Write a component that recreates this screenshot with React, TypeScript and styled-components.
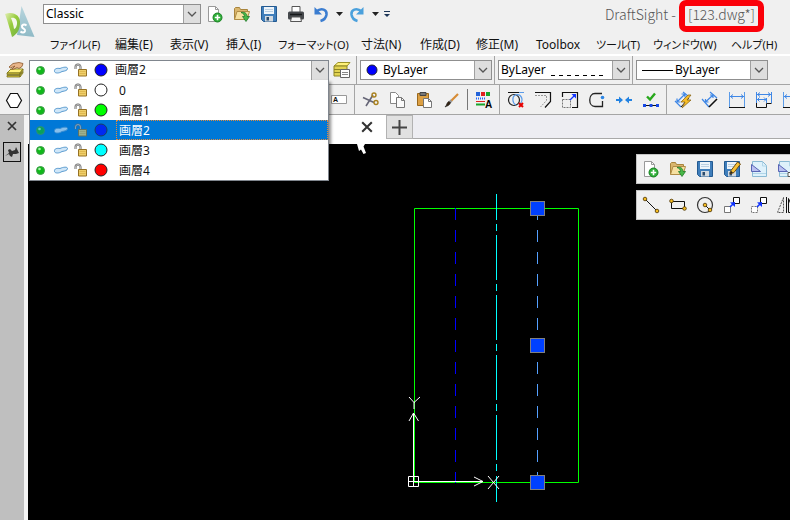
import React, { useState } from "react";
import styled, { createGlobalStyle } from "styled-components";

const GlobalStyle = createGlobalStyle`
  *, *::before, *::after { box-sizing: border-box; }
  body {
    margin: 0;
    background: #f0f0f0;
    color: #111;
    font-family: "Noto Sans", "Noto Sans CJK JP", sans-serif;
    font-size: 12px;
    line-height: 16px;
  }
  button, select { font: inherit; color: inherit; }
  svg { display: block; flex: none; }
`;

/* ---------- layout ---------- */

const Window = styled.div`
  display: flex;
  flex-direction: column;
  min-height: 100vh;
  overflow: hidden;
`;

const Header = styled.header`
  display: flex;
  height: 56px;
  border-bottom: 2px solid #fff;
`;

const LogoBox = styled.div`
  width: 43px;
  padding: 6px 0 0 4px;
  flex: none;
`;

const HeaderMain = styled.div`
  display: flex;
  flex-direction: column;
  flex: 1;
  min-width: 0;
`;

const TitleRow = styled.div`
  display: flex;
  align-items: center;
  height: 32px;
  padding-bottom: 4px;
`;

const Title = styled.h1`
  display: flex;
  align-items: center;
  margin: 0 26px 0 auto;
  gap: 3px;
  white-space: nowrap;
  color: #555;
  font-family: "Noto Sans CJK JP", sans-serif;
  font-size: 14px;
  font-weight: 300;
  line-height: 20px;
`;

const FileName = styled.span`
  display: flex;
  align-items: center;
  justify-content: center;
  min-width: 85px;
  height: 32px;
  margin-top: 3px;
  padding-bottom: 4px;
  border: 6px solid #fb0009;
  border-radius: 7px;
`;

const MenuBar = styled.nav`
  display: grid;
  grid-template-columns: 65px 55px 56px 52px 83px 59px 56px 60px 60px 57px 78px auto;
  justify-content: start;
  padding: 4px 0 0 7px;
`;

const MenuItem = styled.button<{ $kana: boolean }>`
  padding: 0;
  border: 0;
  background: none;
  text-align: left;
  white-space: nowrap;
  font-feature-settings: "palt";
  font-size: ${(p) => (p.$kana ? "11px" : "12px")};
  line-height: 18px;
`;

const Bar = styled.div<{ $h: number }>`
  display: flex;
  align-items: center;
  flex: none;
  height: ${(p) => p.$h}px;
  border-bottom: 1px solid #a5a5a5;
  overflow: hidden;
`;

const LayerBar = styled(Bar)`
  position: relative;
  overflow: visible;
`;

const ListGap = styled.div`
  flex: none;
  width: 297px;
`;

const Separator = styled.span<{ $wide?: boolean; $short?: boolean }>`
  flex: none;
  align-self: center;
  width: 1px;
  height: ${(p) => (p.$short ? "21px" : "100%")};
  margin: 0 ${(p) => (p.$wide ? "3px" : "2px")} 0 2px;
  background: ${(p) => (p.$short ? "#777" : "#a5a5a5")};
`;

const IconButton = styled.button<{ $w?: number }>`
  display: flex;
  align-items: center;
  justify-content: center;
  flex: none;
  width: ${(p) => p.$w ?? 27}px;
  height: 24px;
  padding: 0;
  border: 0;
  background: none;
`;

/* ---------- combo boxes ---------- */

const ComboBox = styled.label<{ $w: number }>`
  display: grid;
  flex: none;
  width: ${(p) => p.$w}px;
  height: 20px;
  border: 1px solid #8f8f8f;
  background: #fff;
  > * { grid-area: 1 / 1; }
`;

const ComboSelect = styled.select<{ $lead: number }>`
  appearance: none;
  width: 100%;
  min-width: 0;
  padding: 0 18px 0 ${(p) => p.$lead}px;
  border: 0;
  background: transparent;
  color: #000;
`;

const ComboArrow = styled.span`
  display: flex;
  align-items: center;
  justify-content: center;
  justify-self: end;
  width: 17px;
  border-left: 1px solid #a0a0a0;
  background: #dedede;
  pointer-events: none;
`;

const ComboMark = styled.span<{ $end?: boolean }>`
  display: flex;
  align-items: center;
  justify-self: ${(p) => (p.$end ? "end" : "start")};
  padding: ${(p) => (p.$end ? "0 26px 0 0" : "0 0 0 5px")};
  pointer-events: none;
`;

const LayerCombo = styled.button`
  display: flex;
  align-items: stretch;
  flex: none;
  width: 300px;
  height: 21px;
  padding: 0;
  border: 1px solid #80868e;
  background: #fff;
  color: #000;
  text-align: left;
`;

const LayerIcons = styled.span`
  display: grid;
  grid-template-columns: 21px 20px 20px 20px;
  place-items: center;
  flex: none;
  height: 100%;
`;

const LayerName = styled.span<{ $inList?: boolean; $selected?: boolean }>`
  flex: 1;
  margin-left: ${(p) => (p.$inList ? "5px" : "0")};
  padding-left: ${(p) => (p.$inList ? "3px" : "4px")};
  line-height: ${(p) => (p.$inList ? "21px" : "18px")};
  height: 100%;
  color: ${(p) => (p.$selected ? "#fff" : "#111")};
  outline: ${(p) => (p.$selected ? "1px dotted #e58a3a" : "none")};
  outline-offset: -1px;
`;

const LayerList = styled.ul`
  position: absolute;
  top: 24px;
  left: 29px;
  z-index: 3;
  width: 300px;
  margin: 0;
  padding: 0;
  border: 1px solid #80868e;
  border-top: 0;
  background: #fff;
  box-shadow: 2px 2px 3px rgba(0, 0, 0, 0.45);
  list-style: none;
`;

const LayerRow = styled.li<{ $selected: boolean }>`
  display: flex;
  height: 20px;
  background: ${(p) => (p.$selected ? "#0078d7" : "#fff")};
  svg { opacity: ${(p) => (p.$selected ? 0.65 : 1)}; }
`;

/* ---------- work area ---------- */

const Work = styled.div`
  display: flex;
  flex: 1;
  min-height: 0;
`;

const SidePanel = styled.aside`
  display: flex;
  flex-direction: column;
  align-items: flex-start;
  flex: none;
  gap: 8px;
  width: 28px;
  padding: 3px 0 0 3px;
  border-right: 4px solid #f4f4f4;
  background: #bfbfbf;
`;

const PanelButton = styled.button<{ $framed?: boolean }>`
  display: flex;
  align-items: center;
  justify-content: center;
  width: 18px;
  height: ${(p) => (p.$framed ? "20px" : "16px")};
  padding: 0;
  border: ${(p) => (p.$framed ? "1px solid #111" : "0")};
  background: none;
`;

const Document = styled.main`
  display: flex;
  flex-direction: column;
  flex: 1;
  min-width: 0;
`;

const TabStrip = styled.div`
  display: flex;
  flex: none;
  height: 29px;
  padding-bottom: 5px;
  background: #fff;
`;

const Tab = styled.div`
  display: flex;
  align-items: center;
  justify-content: flex-end;
  width: 358px;
  padding-right: 6px;
`;

const NewTab = styled.button`
  display: flex;
  align-items: center;
  justify-content: center;
  width: 27px;
  padding: 0;
  border: 1px solid #b2b2b2;
  background: #e1e1e1;
`;

const TabRest = styled.div`
  flex: 1;
  border-bottom: 1px solid #a9a9a9;
  background: #ededf2;
`;

const Canvas = styled.section`
  position: relative;
  flex: 1;
  background: #000;
  overflow: hidden;
`;

const Pointer = styled.div`
  position: absolute;
  top: 0;
  left: 329px;
`;

const FloatingBars = styled.div`
  position: absolute;
  top: 10px;
  left: 608px;
  right: 0;
  display: flex;
  flex-direction: column;
  gap: 6px;
`;

const FloatingBar = styled.div`
  display: flex;
  align-items: center;
  height: 30px;
  border: 1px solid #c4c4c4;
  border-right: 0;
  background: #f0f0f0;
  overflow: hidden;
`;

/* ---------- icons ---------- */

const Ico = ({ children, w = 18, h = 18 }: { children: React.ReactNode; w?: number; h?: number }) => (
  <svg width={w} height={h} viewBox={`0 0 ${w} ${h}`} fill="none" aria-hidden="true">
    {children}
  </svg>
);

const Logo = () => (
  <svg width="32" height="34" viewBox="0 0 32 34" aria-label="DraftSight">
    <defs>
      <linearGradient id="lg" x1="0" y1="0" x2="1" y2="1">
        <stop offset="0" stopColor="#e3efb4" />
        <stop offset=".45" stopColor="#97cc3c" />
        <stop offset="1" stopColor="#6fb046" />
      </linearGradient>
      <linearGradient id="lb" x1="0" y1="0" x2="0" y2="1">
        <stop offset="0" stopColor="#b9d6de" />
        <stop offset="1" stopColor="#8fbac6" />
      </linearGradient>
    </defs>
    <path d="M17.500 0 30.500 31 13 29Z" fill="url(#lb)" />
    <path d="M1 8C9 5 17 9 16 18C15.500 25 12 29 8 31C6 24 4 16 1 8Z" fill="url(#lg)" />
    <path d="M7 12C11 11 13.500 14 13 18C12.500 21 11.500 22.500 10 23C9.500 19 8.500 16 7 12Z" fill="#f4f8ea" />
    <path d="M22.500 19.500C20 17.500 17.500 19 18 21C18.500 23 21.500 22.500 21 25C20.500 27 18 27 16.500 25.500" fill="none" stroke="#fff" strokeWidth="2" />
  </svg>
);

const Chevron = () => (
  <Ico w={10} h={8}><path d="M1 2 5 6 9 2" stroke="#555" strokeWidth="1.3" /></Ico>
);

const NewIcon = () => (
  <Ico>
    <path d="M2.500 1.500h7l3 3v12h-10z" fill="#fff" stroke="#999" />
    <path d="M9.500 1.500v3h3" stroke="#999" />
    <circle cx="11.500" cy="12.500" r="4.500" fill="#2fae38" stroke="#188322" />
    <path d="M11.500 9.800v5.400M8.800 12.500h5.400" stroke="#fff" strokeWidth="1.600" />
  </Ico>
);
const OpenIcon = () => (
  <Ico>
    <path d="M1.500 14.500v-11l1-1h4l1 2h7v3" fill="#d9b56c" stroke="#a8843c" />
    <path d="M1.500 14.500 4 6.500h12.500l-2.500 8z" fill="#f6e0a0" stroke="#b08c46" />
    <path d="M8 7.500c4-.8 6 1 6 4h2.500L13 16.500 9.500 11.500h2c0-2-1-3-3.500-4z" fill="#48b848" stroke="#227a2a" strokeWidth=".8" />
  </Ico>
);
const SaveIcon = ({ edit }: { edit?: boolean }) => (
  <Ico>
    <path d="M1.500 1.500h15v15h-13l-2-2z" fill="#3f7ebb" stroke="#235a91" />
    <path d="M4 2h10v7H4z" fill="#edf4fa" />
    <path d="M5 4.500h8M5 6.500h8" stroke="#bbd0e2" />
    <path d="M5 11h8v5.500H5z" fill="#d3dae0" />
    <path d="M6.500 12h2.500v3.500H6.500z" fill="#2b4c6e" />
    {edit && <path d="M7 14 8 10.500 14.500 2l3 2-6.500 8.500z" fill="#f5c036" stroke="#6c4b13" />}
    {edit && <path d="M7 14 8 11l2 1.500z" fill="#222" />}
  </Ico>
);
const PrintIcon = () => (
  <Ico>
    <path d="M5 7V1.500h8V7" fill="#fff" stroke="#555" />
    <rect x="1" y="6.500" width="16" height="8" rx="1.500" fill="#45484c" />
    <path d="M3 9.500h12" stroke="#17191b" strokeWidth="1.500" />
    <path d="M4.500 12h9l1 4.500h-11z" fill="#f6f6f6" stroke="#555" />
  </Ico>
);
const UndoIcon = ({ flip }: { flip?: boolean }) => (
  <Ico>
    <g transform={flip ? "translate(18 0) scale(-1 1)" : undefined}>
      <path d="M4 6.500C10 2 15 5 14.500 9.500C14 13 12 15 8.500 16" stroke={flip ? "#4aa0dc" : "#3b7dd0"} strokeWidth="2.600" />
      <path d="M2.500 2v7.500H10z" fill={flip ? "#4aa0dc" : "#3b7dd0"} />
    </g>
  </Ico>
);
const CaretIcon = () => <Ico w={8} h={6}><path d="M1 1h7L4.500 5z" fill="#222" /></Ico>;
const MoreIcon = () => <Ico w={8} h={8}><path d="M1 1.500h6" stroke="#1d3557" /><path d="M1 4h6L4 7z" fill="#1d3557" /></Ico>;

const DotIcon = () => (
  <Ico w={11} h={11}>
    <circle cx="5.500" cy="5.500" r="4" fill="#0fb81a" stroke="#3f9d49" />
    <circle cx="4.500" cy="4" r="1.300" fill="#a8f0aa" />
  </Ico>
);
const BlobIcon = () => (
  <Ico w={16} h={10}>
    <path d="M1.500 6.500C1 3.500 4 3 7 3.500C10 2 14.500 1.500 14.500 3.500C14.500 5.500 12 6 9 6.500C6 8.500 2 8.500 1.500 6.500Z" fill="#cfe6f8" stroke="#5a9bd0" />
  </Ico>
);
const LockIcon = () => (
  <Ico w={14} h={14}>
    <path d="M1.500 6V4A2.500 2.500 0 0 1 6.500 4V7" stroke="#666" strokeWidth="2" />
    <path d="M1.500 6V4A2.500 2.500 0 0 1 6.500 4V7" stroke="#ddd" strokeWidth=".7" />
    <path d="M4.500 6.500h8v6.500h-8z" fill="#efcf6a" stroke="#957124" />
    <path d="M5.500 8.500h6M5.500 10.500h6" stroke="#dfb850" />
  </Ico>
);
const SwatchIcon = ({ color }: { color: string }) => (
  <Ico w={14} h={14}><circle cx="7" cy="7" r="6" fill={color} stroke="#222" /></Ico>
);

const LayersIcon = () => (
  <Ico w={20} h={20}>
    <path d="M2 13 6 9h12l-3 4z" fill="#fff27a" stroke="#8b8520" />
    <path d="M2 13h13v1.500H2zM2 15.500h13V17H2zM15 13l3-4v1.500L15 14.500zM15 17l3-4v-1.500l-3 4z" fill="#d8c63a" stroke="#77701c" strokeWidth=".8" />
    <path d="M4 7 8 3.500 14 2.500l4 1-1 3-3 2-2-1L9 9 6.500 9.500 10 6 5.500 8z" fill="#e8b58a" stroke="#8a5528" strokeWidth=".8" />
  </Ico>
);
const LayerSheetIcon = () => (
  <Ico>
    <path d="M1 5 5 1.500h12L14 5z" fill="#fff27a" stroke="#9a9228" />
    <path d="M1 5h13v10H1z" fill="#e2d352" stroke="#8c8425" />
    <path d="M1 8.500h13M1 11.500h6" stroke="#8c8425" />
    <path d="M7.500 8.500h9v8h-9z" fill="#fff" stroke="#666" />
    <path d="M9 11.500h6M9 13.500h6" stroke="#888" />
  </Ico>
);
const HexIcon = () => <Ico><path d="M5.500 2.500h7L16.500 9.500 12.500 16.500H5.500L1.500 9.500z" fill="#fff" stroke="#111" strokeWidth="1.200" /></Ico>;
const TextFieldIcon = () => (
  <Ico>
    <path d="M1.500 4.500h15v8h-15z" fill="#fff" stroke="#999" />
    <text x="3" y="11" fill="#111" fontSize="7" fontWeight="700" fontFamily="Liberation Sans, sans-serif">A</text>
  </Ico>
);
const CutIcon = () => (
  <Ico>
    <path d="M1 6.500 12 11.500M4 15 11 4" stroke="#667" strokeWidth="1.600" />
    <circle cx="12" cy="4" r="2" stroke="#a8801e" strokeWidth="1.400" />
    <circle cx="14" cy="11.500" r="2" stroke="#a8801e" strokeWidth="1.400" />
  </Ico>
);
const CopyIcon = () => (
  <Ico>
    <path d="M1.500 1.500h5l3 3v8h-8z" fill="#fff" stroke="#888" />
    <path d="M7.500 6.500h5l3 3v7h-8z" fill="#fafafa" stroke="#777" />
    <path d="M12.500 6.500v3h3" stroke="#777" />
  </Ico>
);
const PasteIcon = () => (
  <Ico>
    <path d="M1.500 2.500h11v12h-11z" fill="#dca044" stroke="#9a681c" />
    <path d="M4 1.500h6v3H4z" fill="#777" stroke="#444" />
    <path d="M7.500 7.500h5l3 3v6h-8z" fill="#fff" stroke="#777" />
    <path d="M12.500 7.500v3h3" stroke="#777" />
  </Ico>
);
const BrushIcon = () => (
  <Ico>
    <path d="M15 3 8 10" stroke="#d68b35" strokeWidth="2.200" />
    <path d="M8.500 9.500 6.500 11.500" stroke="#999" strokeWidth="2.600" />
    <path d="M7.500 11.500C7 14.500 4 15 2 16C4 14 3.500 12 5.500 10.500Z" fill="#332211" stroke="#222" strokeWidth=".6" />
  </Ico>
);
const PropsIcon = () => (
  <Ico>
    <path d="M1 1h4v4H1z" fill="#2463d8" /><path d="M6 1h4v4H6z" fill="#e02020" /><path d="M11 1h4v4h-4z" fill="#18a52b" />
    <path d="M1 7.500h10" stroke="#26f" strokeDasharray="1 1" strokeWidth="2" />
    <path d="M1 10.500h9" stroke="#e02020" /><path d="M1 13.500h9" stroke="#18a52b" strokeWidth="2" />
    <text x="10" y="17" fill="#000" fontSize="10" fontWeight="700" fontFamily="Liberation Sans, sans-serif">A</text>
  </Ico>
);
const OffsetDeleteIcon = () => (
  <Ico>
    <path d="M1 1.500h11" stroke="#111" /><path d="M12 1.500h5" stroke="#5a9be8" />
    <circle cx="7" cy="9" r="5.500" stroke="#222" strokeWidth="1.200" />
    <path d="M8 4C14 2 18 9 12 14M8 4C5 6 5 12 9 14" stroke="#5a9be8" strokeWidth="1.200" />
    <path d="M12 12l4 4M16 12l-4 4" stroke="#e60000" strokeWidth="2" />
  </Ico>
);
const ChamferIcon = () => (
  <Ico>
    <path d="M1 1.500h15.500v9L11 16.500" stroke="#111" strokeWidth="1.200" />
    <path d="M1 4.500h11.500v5L6.500 16" stroke="#999" strokeDasharray="2 1" />
  </Ico>
);
const ScaleIcon = () => (
  <Ico>
    <path d="M1.500 6V1.500h15v15H11" stroke="#111" strokeWidth="1.200" />
    <path d="M1.500 8.500h8v8h-8z" stroke="#777" strokeDasharray="2 1" />
    <path d="M9 9 14 4" stroke="#1034ff" strokeWidth="1.300" /><path d="M15 3v4.500L10.500 3z" fill="#1034ff" />
  </Ico>
);
const FilletIcon = () => (
  <Ico>
    <path d="M14 2.500H7C0 2.500 0 15.500 7 15.500H14.500V10" stroke="#222" strokeWidth="1.300" />
    <circle cx="14.500" cy="6.500" r="1.800" fill="#2d86e5" />
  </Ico>
);
const JoinIcon = () => (
  <Ico>
    <path d="M1 9h5M12 9h5" stroke="#2383e2" strokeWidth="2" />
    <path d="M4 5.500 8 9l-4 3.500zM14 5.500 10 9l4 3.500z" fill="#2383e2" />
  </Ico>
);
const CheckLineIcon = () => (
  <Ico>
    <path d="M5 5.500 8 8.500 13 2.500" stroke="#28a81c" strokeWidth="2.400" />
    <path d="M1 14.500h16" stroke="#111" />
    <path d="M1 13h3v3H1zM7.500 13h3v3h-3zM14 13h3v3h-3z" fill="#1648e8" />
  </Ico>
);
const SmartDimIcon = () => (
  <Ico>
    <path d="M1 10 7 16M9 1l5 4" stroke="#3f87e6" strokeWidth="1.200" />
    <path d="M3 11 11 3M3 7.500V11h3.500M7.500 3H11v3.500" stroke="#3f87e6" strokeWidth="1.200" />
    <path d="M7 16 15 7" stroke="#111" />
    <path d="M14 4 7 11h4l-3 6 9-8h-4l4-5z" fill="#f7bd25" stroke="#8c671a" strokeWidth=".8" />
  </Ico>
);
const AlignedDimIcon = () => (
  <Ico>
    <path d="M1 8 8 16M9 1l7 6" stroke="#3f87e6" strokeWidth="1.200" />
    <path d="M4.500 11 12 4M4.500 8v3h3M9 4h3v3" stroke="#3f87e6" strokeWidth="1.200" />
    <path d="M8 16 16 8" stroke="#111" strokeWidth="1.600" />
  </Ico>
);
const LinearDimIcon = () => (
  <Ico>
    <path d="M1.500 1v16M16.500 1v16" stroke="#5a9be8" />
    <path d="M2 5.500h14M5 3.500 2.500 5.500 5 7.500M13 3.500l2.500 2L13 7.500" stroke="#3f87e6" />
    <path d="M1 16.500h16" stroke="#111" />
  </Ico>
);
const BaselineDimIcon = () => (
  <Ico>
    <path d="M1.500 1v11M16.500 1v11M11.500 7v5M2 3.500h14M2 8.500h9M5 1.500l-2.500 2L5 5.500M13 1.500l2.500 2-2.500 2M4.500 6.500l-2 2 2 2M9 6.500l2 2-2 2" stroke="#3f87e6" />
    <path d="M1.500 12v4.500h10v-4h5" stroke="#111" />
  </Ico>
);
const SheetIcon = ({ framed }: { framed?: boolean }) => (
  <Ico>
    <path d="M2.500 1.500h10l4 4v11h-14z" fill="#def1fb" stroke="#89b9d3" />
    <path d="M12.500 2v4h4M3 13.500h13" stroke="#b0d5e8" />
    <path d="M1.500 4.500v7h9z" fill="#b9bff0" stroke="#5865b5" />
    {framed && <path d="M11 12.500h7v4h-7z" fill="#fff" stroke="#555" />}
  </Ico>
);
const Node = ({ x, y }: { x: number; y: number }) => <circle cx={x} cy={y} r="1.800" fill="#f5bb20" stroke="#4a3200" strokeWidth=".8" />;
const LineIcon = () => <Ico><path d="M3 3 15 15" stroke="#111" /><Node x={3} y={3} /><Node x={15} y={15} /></Ico>;
const RectIcon = () => <Ico><path d="M2.500 5.500h13v7h-13z" stroke="#111" /><Node x={2.5} y={5} /><Node x={15.5} y={12.5} /></Ico>;
const CircleIcon = () => <Ico><circle cx="9" cy="9" r="7.500" stroke="#333" strokeWidth="1.200" /><path d="M9 9l5 5" stroke="#111" /><Node x={9} y={9} /><Node x={14} y={14} /></Ico>;
const CopyEntityIcon = ({ dashed }: { dashed?: boolean }) => (
  <Ico>
    <path d="M1.500 10.500h6v6h-6z" stroke="#777" fill="#fff" strokeDasharray={dashed ? "2 1" : undefined} />
    <path d="M10.500 1.500h6v6h-6z" stroke="#111" fill="#fff" />
    <path d="M7 11 10 8" stroke="#1034ff" strokeWidth="1.600" /><path d="M12 6v5L7 6.500z" fill="#1034ff" />
  </Ico>
);
const MirrorIcon = () => (
  <Ico>
    <path d="M6.500 1.500v15h-6z" stroke="#555" strokeDasharray="2 1" /><path d="M9.500 1v16M11.500 2.500l6 14h-6z" stroke="#111" />
  </Ico>
);
const PinIcon = () => (
  <Ico w={16} h={16}>
    <path d="M1 12 5 9 4 6 6 5 8 7 11 6 12 3 15 9 12 10 9 10 8 13 6 12 5 10z" fill="#333" />
  </Ico>
);
const CrossIcon = ({ size = 10 }: { size?: number }) => (
  <svg width={size} height={size} viewBox="0 0 10 10" aria-hidden="true"><path d="M1 1 9 9M9 1 1 9" stroke="#333" strokeWidth="1.700" /></svg>
);

/* ---------- parts ---------- */

type Tool = [string, React.ReactNode];

const Tools = ({ items }: { items: Tool[] }) => (
  <>
    {items.map(([label, icon]) => (
      <IconButton key={label} aria-label={label} title={label}>{icon}</IconButton>
    ))}
  </>
);

const Combo = ({ label, value, width, lead = 2, mark, markEnd }: {
  label: string; value: string; width: number; lead?: number; mark?: React.ReactNode; markEnd?: boolean;
}) => (
  <ComboBox $w={width}>
    <ComboSelect aria-label={label} $lead={lead} defaultValue={value}>
      <option>{value}</option>
    </ComboSelect>
    {mark && <ComboMark $end={markEnd}>{mark}</ComboMark>}
    <ComboArrow><Chevron /></ComboArrow>
  </ComboBox>
);

const layers = [
  { name: "0", color: "#ffffff" },
  { name: "画層1", color: "#00ff00" },
  { name: "画層2", color: "#0000ff" },
  { name: "画層3", color: "#00ffff" },
  { name: "画層4", color: "#ff0000" },
];

const LayerState = ({ color }: { color: string }) => (
  <LayerIcons><DotIcon /><BlobIcon /><LockIcon /><SwatchIcon color={color} /></LayerIcons>
);

const menus = ["ファイル(F)", "編集(E)", "表示(V)", "挿入(I)", "フォーマット(O)", "寸法(N)", "作成(D)", "修正(M)", "Toolbox", "ツール(T)", "ウィンドウ(W)", "ヘルプ(H)"];
const startsWithKana = (text: string) => /^[ァ-ヶ]/.test(text);

const fileTools: Tool[] = [["新規", <NewIcon />], ["開く", <OpenIcon />], ["保存", <SaveIcon />], ["印刷", <PrintIcon />]];
const clipTools: Tool[] = [["切り取り", <CutIcon />], ["コピー", <CopyIcon />], ["貼り付け", <PasteIcon />], ["プロパティペインタ", <BrushIcon />]];
const editTools: Tool[] = [["重複削除", <OffsetDeleteIcon />], ["面取り", <ChamferIcon />], ["尺度", <ScaleIcon />], ["フィレット", <FilletIcon />], ["結合", <JoinIcon />], ["確認", <CheckLineIcon />]];
const dimTools: Tool[] = [["スマート寸法", <SmartDimIcon />], ["平行寸法", <AlignedDimIcon />], ["長さ寸法", <LinearDimIcon />], ["並列寸法", <BaselineDimIcon />], ["直列寸法", <LinearDimIcon />]];
const standardTools: Tool[] = [["新規", <NewIcon />], ["開く", <OpenIcon />], ["保存", <SaveIcon />], ["名前を付けて保存", <SaveIcon edit />], ["シート", <SheetIcon />], ["シート設定", <SheetIcon framed />]];
const drawTools: Tool[] = [["線分", <LineIcon />], ["四角形", <RectIcon />], ["円", <CircleIcon />], ["コピー", <CopyEntityIcon />], ["移動", <CopyEntityIcon dashed />], ["鏡像", <MirrorIcon />]];

const Drawing = () => (
  <svg width="762" height="376" viewBox="28 144 762 376" fill="none" aria-label="図面">
    <path d="M414.500 208.500h164v274h-164z" stroke="#00ff00" />
    <path d="M455.500 208v12M455.500 230V483" stroke="#0000ff" strokeDasharray="12 10" />
    <path d="M496.500 194v26M496.500 224v7M496.500 476v26" stroke="#00ffff" />
    <path d="M496.500 235V472" stroke="#00ffff" strokeDasharray="45 4 7 4" />
    <path d="M537.500 208v12M537.500 230V483" stroke="#55a0ff" strokeDasharray="12 10" />
    {[208, 345, 482].map((y) => (
      <rect key={y} x="530.500" y={y - 6.5} width="14" height="14" fill="#0040ff" stroke="#808080" />
    ))}
    <g stroke="#fff">
      <path d="M408.500 476.500h10v10h-10zM413.500 413v73M408 481.500h75" />
      <path d="M409 421 413.500 413 418.500 421M474 477 483 481.500 474 486" />
      <path d="M409 397 414 402.500 420 397M414 402v7M488 476l11 13M499 476l-11 13" />
    </g>
  </svg>
);

export default function App() {
  const [selected, setSelected] = useState(2);
  const current = layers[selected];
  return (
    <>
      <GlobalStyle />
      <Window>
        <Header>
          <LogoBox><Logo /></LogoBox>
          <HeaderMain>
            <TitleRow>
              <Combo label="ワークスペース" value="Classic" width={158} />
              <Tools items={fileTools} />
              <IconButton $w={24} aria-label="元に戻す"><UndoIcon /></IconButton>
              <IconButton $w={12} aria-label="元に戻す履歴"><CaretIcon /></IconButton>
              <IconButton $w={24} aria-label="やり直し"><UndoIcon flip /></IconButton>
              <IconButton $w={12} aria-label="やり直し履歴"><CaretIcon /></IconButton>
              <IconButton $w={12} aria-label="その他"><MoreIcon /></IconButton>
              <Title>DraftSight - <FileName>[123.dwg*]</FileName></Title>
            </TitleRow>
            <MenuBar>
              {menus.map((m) => <MenuItem key={m} $kana={startsWithKana(m)}>{m}</MenuItem>)}
            </MenuBar>
          </HeaderMain>
        </Header>

        <LayerBar $h={29}>
          <IconButton $w={29} aria-label="画層管理"><LayersIcon /></IconButton>
          <LayerCombo aria-haspopup="listbox" aria-expanded="true">
            <LayerState color={current.color} />
            <LayerName>{current.name}</LayerName>
            <ComboArrow><Chevron /></ComboArrow>
          </LayerCombo>
          <IconButton $w={25} aria-label="画層状態"><LayerSheetIcon /></IconButton>
          <Separator $wide />
          <Combo label="線の色" value="ByLayer" width={132} lead={22} mark={<Ico w={12} h={12}><circle cx="6" cy="6" r="5" fill="#0000ff" stroke="#223" /></Ico>} />
          <Separator $wide />
          <Combo label="線種" value="ByLayer" width={132} markEnd mark={<Ico w={52} h={12}><path d="M0 11.500h52" stroke="#000" strokeDasharray="4 4" /></Ico>} />
          <Separator $wide />
          <Combo label="線の太さ" value="ByLayer" width={132} lead={38} mark={<Ico w={32} h={12}><path d="M-1 6.500h32" stroke="#000" /></Ico>} />
          <LayerList role="listbox" aria-label="画層">
            {layers.map((l, i) => (
              <LayerRow key={l.name} role="option" aria-selected={i === selected} $selected={i === selected} onClick={() => setSelected(i)}>
                <LayerState color={l.color} />
                <LayerName $inList $selected={i === selected}>{l.name}</LayerName>
              </LayerRow>
            ))}
          </LayerList>
        </LayerBar>

        <Bar $h={30}>
          <IconButton $w={28} aria-label="ポリゴン"><HexIcon /></IconButton>
          <ListGap />
          <Tools items={[["文字", <TextFieldIcon />]]} />
          <Separator />
          <Tools items={clipTools} />
          <Separator $short />
          <Tools items={[["プロパティ", <PropsIcon />]]} />
          <Separator />
          <Tools items={editTools} />
          <Separator />
          <Tools items={dimTools} />
        </Bar>

        <Work>
          <SidePanel>
            <PanelButton aria-label="閉じる"><CrossIcon /></PanelButton>
            <PanelButton $framed aria-label="固定"><PinIcon /></PanelButton>
          </SidePanel>
          <Document>
            <TabStrip>
              <Tab><IconButton aria-label="タブを閉じる"><CrossIcon size={12} /></IconButton></Tab>
              <NewTab aria-label="新しいタブ"><Ico w={17} h={17}><path d="M8.500 1v15M1 8.500h15" stroke="#444" strokeWidth="2" /></Ico></NewTab>
              <TabRest />
            </TabStrip>
            <Canvas>
              <Drawing />
              <Pointer><Ico w={12} h={12}><path d="M0 0H8L6.500 2.500 9 9 6.500 10 4 5.500 2 7Z" fill="#fff" /></Ico></Pointer>
              <FloatingBars>
                <FloatingBar><Tools items={standardTools} /></FloatingBar>
                <FloatingBar><Tools items={drawTools} /></FloatingBar>
              </FloatingBars>
            </Canvas>
          </Document>
        </Work>
      </Window>
    </>
  );
}
